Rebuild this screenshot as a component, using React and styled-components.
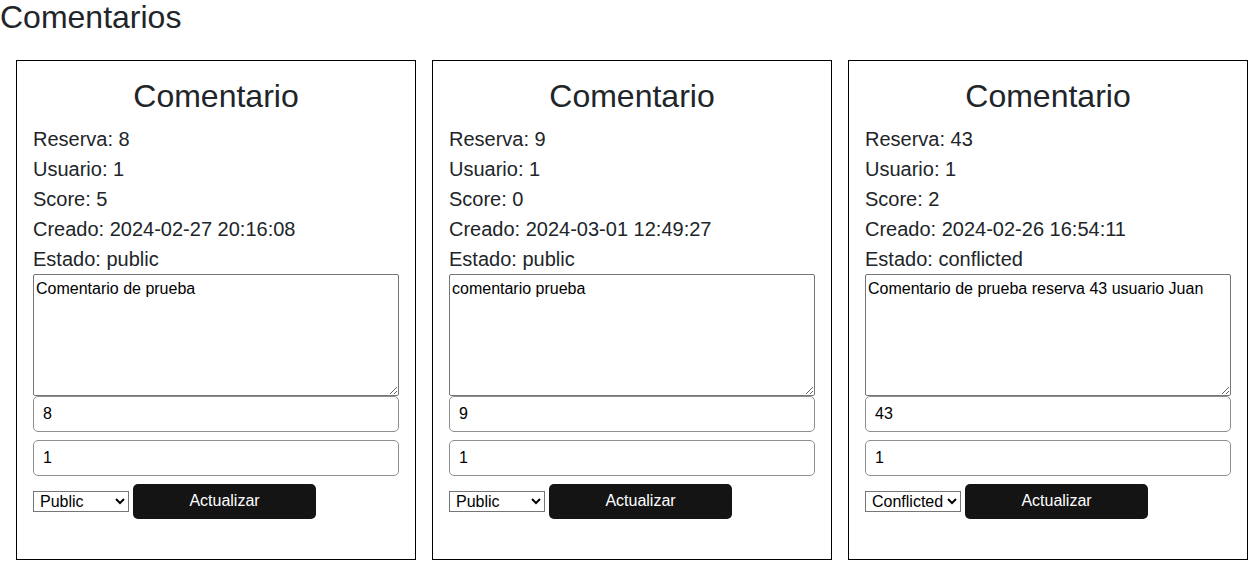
import React from 'react';
import styled, { createGlobalStyle } from 'styled-components';

const GlobalStyle = createGlobalStyle`
	body {
		margin: 0;
		background: #fff;
		color: #212529;
		font-family: 'Liberation Sans', Arial, sans-serif;
	}
	* {
		box-sizing: border-box;
	}
`;

const PageTitle = styled.h2`
	margin: 0 0 25px;
	font-size: 32px;
	font-weight: 400;
	line-height: 1.1;
`;

const CardList = styled.div`
	display: flex;
	gap: 16px;
	padding: 0 16px;
`;

const Card = styled.div`
	flex: 0 0 400px;
	width: 400px;
	height: 500px;
	border: 1px solid #000;
	padding: 16px;
`;

const CardTitle = styled.h2`
	margin: 0 0 8px;
	text-align: center;
	font-size: 32px;
	font-weight: 400;
	line-height: 1.2;
`;

const InfoLine = styled.p`
	margin: 0;
	font-size: 20px;
	line-height: 1.5;
`;

const TextArea = styled.textarea`
	display: block;
	width: 100%;
	height: 122px;
	margin: 0;
	padding: 5px 2px 2px;
	font-family: 'Liberation Sans', Arial, sans-serif;
	font-size: 16px;
	color: #000;
	border: 1px solid #767676;
	border-radius: 2px;
`;

const TextInput = styled.input`
	display: block;
	width: 100%;
	margin: 0 0 8px;
	padding: 8px 9px;
	font-family: 'Liberation Sans', Arial, sans-serif;
	font-size: 16px;
	color: #000;
	border: 1px solid #8f8f8f;
	border-radius: 5px;
`;

const ActionRow = styled.div`
	display: flex;
	align-items: center;
	gap: 4px;
`;

const StateSelect = styled.select`
	width: 96px;
	height: 21px;
	padding: 0 0 0 2px;
	font-family: 'Liberation Sans', Arial, sans-serif;
	font-size: 16px;
	color: #000;
	border: 1px solid #767676;
	border-radius: 0;
	background: #fff;
`;

const UpdateButton = styled.button`
	width: 50%;
	height: 35px;
	padding: 0;
	border: none;
	border-radius: 5px;
	background: #141414;
	color: #fff;
	font-family: 'Liberation Sans', Arial, sans-serif;
	font-size: 16px;
`;

const comentarios = [
	{ reserva: 8, usuario: 1, score: 5, creado: '2024-02-27 20:16:08', estado: 'public', texto: 'Comentario de prueba' },
	{ reserva: 9, usuario: 1, score: 0, creado: '2024-03-01 12:49:27', estado: 'public', texto: 'comentario prueba' },
	{ reserva: 43, usuario: 1, score: 2, creado: '2024-02-26 16:54:11', estado: 'conflicted', texto: 'Comentario de prueba reserva 43 usuario Juan' },
];

const Comentario = ({ c }) => (
	<Card>
		<CardTitle>Comentario</CardTitle>
		<InfoLine>Reserva: {c.reserva}</InfoLine>
		<InfoLine>Usuario: {c.usuario}</InfoLine>
		<InfoLine>Score: {c.score}</InfoLine>
		<InfoLine>Creado: {c.creado}</InfoLine>
		<InfoLine>Estado: {c.estado}</InfoLine>
		<TextArea defaultValue={c.texto} />
		<TextInput type='text' defaultValue={c.reserva} />
		<TextInput type='text' defaultValue={c.usuario} />
		<ActionRow>
			<StateSelect defaultValue={c.estado}>
				<option value='public'>Public</option>
				<option value='private'>Private</option>
				<option value='conflicted'>Conflicted</option>
			</StateSelect>
			<UpdateButton>Actualizar</UpdateButton>
		</ActionRow>
	</Card>
);

export default function App() {
	return (
		<>
			<GlobalStyle />
			<PageTitle>Comentarios</PageTitle>
			<CardList>
				{comentarios.map((c) => (
					<Comentario key={c.reserva} c={c} />
				))}
			</CardList>
		</>
	);
}
